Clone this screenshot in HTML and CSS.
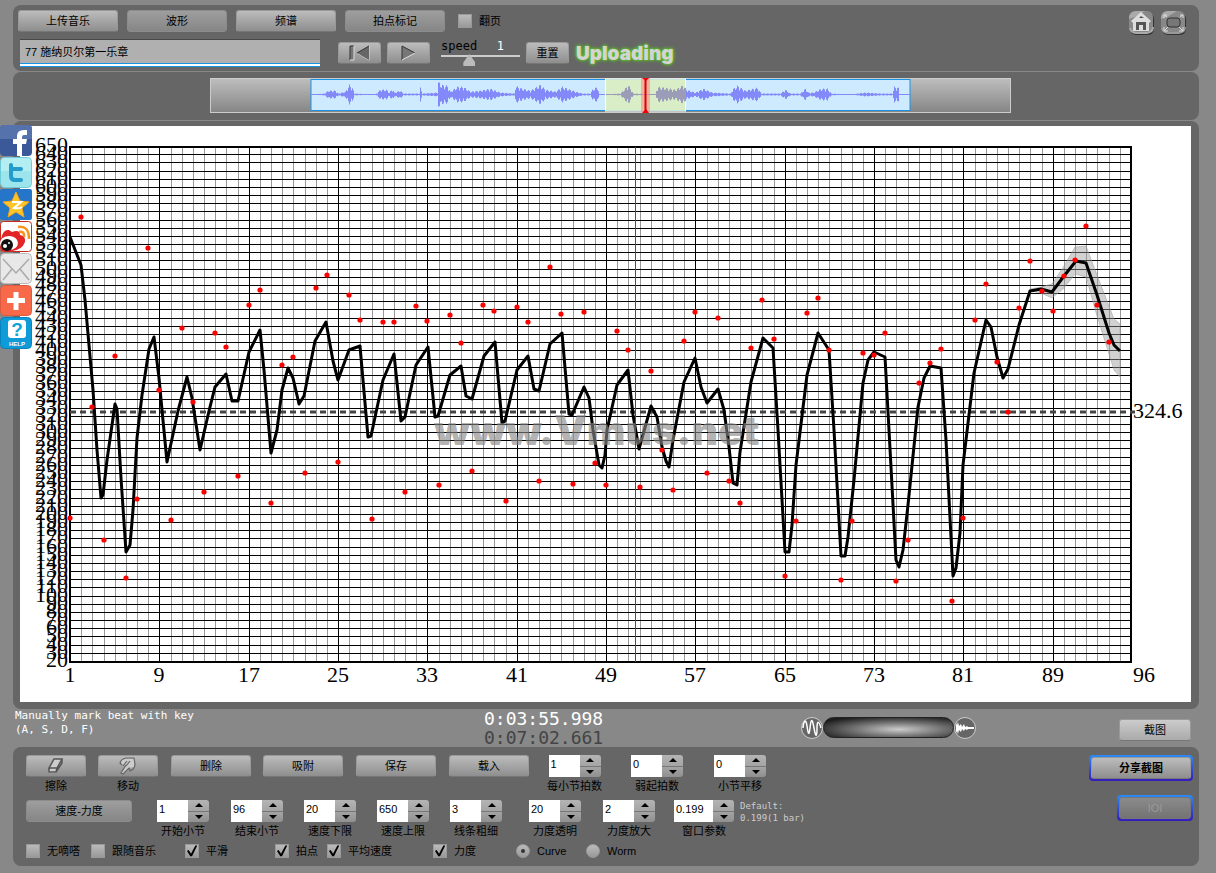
FILE: index.html
```html
<!DOCTYPE html>
<html lang="zh-CN">
<head>
<meta charset="utf-8">
<meta name="viewport" content="width=device-width, initial-scale=1">
<title>Vmus</title>
<link rel="stylesheet" href="styles.css">
</head>
<body>
<header class="panel toolbar">
  <div class="toolbar-main">
    <div class="toolbar-row">
      <button class="btn wide">上传音乐</button>
      <button class="btn wide pressed">波形</button>
      <button class="btn wide">频谱</button>
      <button class="btn wide pressed">拍点标记</button>
      <label class="option flip"><input class="tick" type="checkbox">翻页</label>
    </div>
    <div class="toolbar-row player">
      <input class="title-box" type="text" aria-label="曲目" value="77 施纳贝尔第一乐章">
      <div class="transport">
        <button class="btn small" aria-label="上一个"><svg width="24" height="17" viewBox="0 0 24 17"><path d="M2 1h4v14H2z" fill="#777"/><path d="M2 15V1h4" fill="none" stroke="#333"/><path d="M6 1v14H2M21 1v14L9 8" fill="none" stroke="#ddd"/><path d="M21 1v14L9 8z" fill="#666"/><path d="M21 1L9 8" stroke="#333"/></svg></button>
        <button class="btn small" aria-label="播放"><svg width="20" height="17" viewBox="0 0 20 17"><path d="M3 1v14l13-7z" fill="#777"/><path d="M3 15V1l13 7" fill="none" stroke="#333"/><path d="M3 15l13-7" stroke="#ddd"/></svg></button>
      </div>
      <div class="speed">
        <div class="speed-text"><label for="speed">speed</label><output for="speed">1</output></div>
        <input id="speed" type="range" min="0" max="3" step="0.1" value="1">
      </div>
      <button class="btn small">重置</button>
      <strong class="uploading">Uploading</strong>
    </div>
  </div>
  <nav class="corner">
    <button class="corner-btn" aria-label="主页"><svg width="27" height="26" viewBox="0 0 27 26"><rect x="2" y="3" width="24" height="22" rx="6" fill="#333"/><rect x="1" y="1" width="24" height="22" rx="6" fill="#888"/><path d="M1 9Q1 1 9 1h8L7 7z" fill="#aaa"/><path d="M2 18q1 5 7 5h10q6-1 6-6" fill="none" stroke="#aaa" stroke-width="2"/><path d="M13 2l10 9-2 2v8H5v-8l-2-2z" fill="#ddd"/><path d="M8 12h10v8h-3v-5h-4v5H8zM11 8l2-2 3 2z" fill="#555"/></svg></button>
    <button class="corner-btn" aria-label="全屏"><svg width="27" height="26" viewBox="0 0 27 26"><rect x="2" y="3" width="24" height="22" rx="6" fill="#333"/><rect x="1" y="1" width="24" height="22" rx="6" fill="#888"/><path d="M1 9Q1 1 9 1h8L7 7z" fill="#aaa"/><path d="M2 18q1 5 7 5h10q6-1 6-6" fill="none" stroke="#999" stroke-width="2"/><rect x="7" y="8" width="13" height="9" rx="3" fill="#777" stroke="#333"/><path d="M4 8V5h3M20 5h3v3M4 17v4h4M19 21h4v-4M4 21l4-4M23 21l-4-4M4 5l3 2M23 5l-3 2" fill="none" stroke="#ddd"/></svg></button>
  </nav>
</header>

<section class="panel overview" aria-label="波形">
  <svg class="overview-map" viewBox="210 78 801 35">
    <defs><linearGradient id="steel" x1="0" y1="0" x2="0" y2="1"><stop offset="0" stop-color="#bebebe"/><stop offset="1" stop-color="#858585"/></linearGradient></defs>
    <rect x="210.500" y="78.500" width="800" height="34" fill="url(#steel)" stroke="#ccc"/>
    <rect x="311" y="79.500" width="599" height="31" fill="#cdeaff" stroke="#1893e6"/>
    <path id="wave" stroke="#8389f8" fill="none"/>
    <rect x="605.500" y="79" width="80" height="32" fill="#e1f0a0" fill-opacity=".6" stroke="#fff"/>
    <path id="wave-selected" stroke="#9b9cb8" fill="none"/>
    <rect x="641" y="78" width="9" height="34" fill="#f88" fill-opacity=".6"/>
    <path d="M645.500 78v35" stroke="#d00" stroke-width="2"/>
    <path d="M642 78h7l-3 3zM642 113h7l-3-4z" fill="#e00"/>
  </svg>
</section>

<main class="panel graph">
  <svg class="chart" viewBox="20 126 1171 576" role="img" aria-label="速度曲线">
    <path id="minor" class="minor"/>
    <path id="major" class="major"/>
    <rect class="frame" x="70" y="147" width="1061" height="515"/>
    <g id="y-labels" class="axis y"></g>
    <g id="x-labels" class="axis x"></g>
    <polygon class="band" points="1030,289 1041,287 1052,284 1064,266 1075,247 1086,246 1097,275 1109,306 1114,319 1120,324 1120,377 1114,370 1109,354 1097,316 1086,277 1075,274 1064,288 1052,298 1041,293 1030,291"/>
    <path class="average" d="M70 412H1135"/>
    <polyline id="curve" class="curve"/>
    <text class="watermark" x="434" y="445">www.Vmus.net</text>
    <path class="playhead" d="M635.500 147V662"/>
    <g id="dots" class="dots"></g>
    <text class="axis" x="1133" y="418">324.6</text>
  </svg>
</main>

<section class="status">
  <p class="hint">Manually mark beat with key<br>(A, S, D, F)</p>
  <p class="clock"><time>0:03:55.998</time><time class="total">0:07:02.661</time></p>
  <div class="mixer">
    <svg width="22" height="24" viewBox="0 0 22 24"><circle cx="11" cy="12" r="10.500" fill="#666" stroke="#ccc"/><path d="M2 12C3 3 5 3 6 10S8 21 9 12 11 1 13 12 16 20 16 12 18 5 20 12" fill="none" stroke="#fff" stroke-width="1.500"/></svg>
    <div class="mixer-bar"></div>
    <svg width="22" height="24" viewBox="0 0 22 24"><circle cx="11" cy="12" r="10.500" fill="#666" stroke="#ccc"/><path d="M2 7l1 2 1-3 1 4 2-2 1 3 2-3 1 3 2-1 1 1h6v2h-6l-1 1-2-1-1 2-2-2-1 3-2-2-1 4-1-3-1 2z" fill="#fff"/></svg>
  </div>
  <button class="btn shot">截图</button>
</section>

<section class="panel controls">
  <div class="settings">
    <div class="grid row-edit">
      <div class="field"><button id="erase" class="btn tool"><svg width="20" height="18" viewBox="0 0 20 18"><path d="M8 2l8 0-6 14-8 0z" fill="#ccc"/><path d="M8 2h8l-5 9H3zM3 11v4h7l1-4M10 15l6-9V2" fill="none" stroke="#555" stroke-width="1.500"/></svg></button><label for="erase">擦除</label></div>
      <div class="field"><button id="move" class="btn tool"><svg width="20" height="18" viewBox="0 0 20 18"><path d="M3 7Q2 2 8 2h8v8l-5 1-6 6-2-1 5-7z" fill="#ccc"/><path d="M4 8L2 6q1-4 6-5h8l1 6q0 5-5 7l-1-3-6 6-2-1 5-8M5 9l4-5M8 9l4-5" fill="none" stroke="#666" stroke-width="1.200"/></svg></button><label for="move">移动</label></div>
      <button class="btn action">删除</button>
      <button class="btn action">吸附</button>
      <button class="btn action">保存</button>
      <button class="btn action">载入</button>
      <div class="field" data-stepper="每小节拍数" data-value="1"></div>
      <div class="field" data-stepper="弱起拍数" data-value="0"></div>
      <div class="field" data-stepper="小节平移" data-value="0"></div>
    </div>
    <div class="grid row-range">
      <button class="btn mode pressed">速度-力度</button>
      <div class="field" data-stepper="开始小节" data-value="1"></div>
      <div class="field" data-stepper="结束小节" data-value="96"></div>
      <div class="field" data-stepper="速度下限" data-value="20"></div>
      <div class="field" data-stepper="速度上限" data-value="650"></div>
      <div class="field" data-stepper="线条粗细" data-value="3"></div>
      <div class="field" data-stepper="力度透明" data-value="20"></div>
      <div class="field" data-stepper="力度放大" data-value="2"></div>
      <div class="field long" data-stepper="窗口参数" data-value="0.199"></div>
      <p class="default">Default:<br>0.199(1 bar)</p>
    </div>
    <div class="grid row-options">
      <label class="option"><input class="tick" type="checkbox">无嘀嗒</label>
      <label class="option"><input class="tick" type="checkbox">跟随音乐</label>
      <label class="option"><input class="tick" type="checkbox" checked>平滑</label>
      <label class="option"><input class="tick" type="checkbox" checked>拍点</label>
      <label class="option"><input class="tick" type="checkbox" checked>平均速度</label>
      <label class="option"><input class="tick" type="checkbox" checked>力度</label>
      <label class="option"><input class="dot" type="radio" name="view" checked>Curve</label>
      <label class="option"><input class="dot" type="radio" name="view">Worm</label>
    </div>
  </div>
  <div class="side">
    <div class="focus"><button class="btn share">分享截图</button></div>
    <div class="focus"><button class="btn lol" disabled>IOI</button></div>
  </div>
</section>

<nav class="social">
  <a href="#" aria-label="Facebook"><svg viewBox="0 0 32 32"><rect width="32" height="31" rx="4" fill="#3b5998"/><path d="M0 4q0-4 4-4h24q4 0 4 4v10H0z" fill="#5572ad"/><path d="M17 31V19h-4v-5h4v-3q0-6 7-6h3v5h-3q-2 0-2 2v2h5l-1 5h-4v12z" fill="#fff"/></svg></a>
  <a href="#" aria-label="Twitter"><svg viewBox="0 0 32 32"><rect x=".5" y=".5" width="31" height="30" rx="4" fill="#9ce5ec" stroke="#70cbd8"/><path d="M1 5q0-4 4-4h22q4 0 4 4v9H1z" fill="#b2eef2"/><path d="M11 8v11q0 4 4 4h6M11 12h10" fill="none" stroke="#259bcb" stroke-width="4" stroke-linecap="round"/></svg></a>
  <a href="#" aria-label="Qzone"><svg viewBox="0 0 32 32"><rect width="32" height="31" rx="2" fill="#2576c8"/><path d="M16 3l4 9 9 1-7 6 2 9-8-5-8 5 2-9-7-6 9-1z" fill="#fcc62b" stroke="#f5a31b"/><path d="M12 13h9l-7 6q5 1 8-1" fill="none" stroke="#fff" stroke-width="2"/></svg></a>
  <a href="#" aria-label="Weibo"><svg viewBox="0 0 32 32"><rect x=".5" y=".5" width="31" height="30" rx="3" fill="#fff" stroke="#c62b20"/><path d="M1 18Q3 8 9 9l3 2q8-3 8 3 6 1 5 7-3 8-13 9H1z" fill="#e32528"/><ellipse cx="9" cy="22" rx="9" ry="7" fill="#fff"/><circle cx="7" cy="24" r="6" fill="#111"/><circle cx="5" cy="25" r="2" fill="#fff"/><circle cx="9" cy="22" r="1" fill="#fff"/><path d="M18 6q11-2 11 12M19 11q6-1 5 5" fill="none" stroke="#f7941d" stroke-width="2.500"/></svg></a>
  <a href="#" aria-label="Email"><svg viewBox="0 0 32 32"><rect x=".5" y=".5" width="31" height="30" rx="4" fill="#e8e8e8" stroke="#bbb"/><path d="M3 6l13 14L29 6M3 27l9-11M29 27l-9-11" fill="none" stroke="#aaa" stroke-width="1.500"/></svg></a>
  <a href="#" aria-label="More"><svg viewBox="0 0 32 32"><rect x=".5" y=".5" width="31" height="30" rx="4" fill="#f8694a" stroke="#dc5b40"/><path d="M16 7v18M7 15.500h18" stroke="#fff" stroke-width="5"/></svg></a>
  <a href="#" class="help" aria-label="Help"><svg viewBox="0 0 32 32"><rect x=".5" y=".5" width="31" height="31" rx="4" fill="#0f9bd7" stroke="#0783bd"/><rect x="8" y="3" width="18" height="18" rx="3" fill="#fff"/><text class="help-mark" x="17" y="19">?</text><text class="help-word" x="17" y="29">HELP</text></svg></a>
</nav>
<script src="app.js"></script>
</body>
</html>
```

FILE: styles.css
```css
* { box-sizing: border-box; }
body {
  margin: 0;
  padding: 5px 17px 7px 13px;
  position: relative;
  background: #888;
  color: #000;
  font: 11px/14px "Liberation Sans", "Noto Sans CJK SC", sans-serif;
}
p { margin: 0; }
button, input { font: inherit; color: inherit; margin: 0; }
.panel { background: #666; border-radius: 8px; margin-bottom: 1px; }

.btn {
  height: 22px;
  padding: 0;
  border: 1px solid #999;
  border-bottom-color: #777;
  border-radius: 3px;
  background: linear-gradient(#bcbcbc, #8e8e8e);
  display: flex;
  align-items: center;
  justify-content: center;
}
.pressed { background: linear-gradient(#9e9e9e, #868686); border-color: #8c8c8c; }
.wide { width: 100px; }
.small { width: 43px; }

.toolbar { display: flex; justify-content: space-between; padding: 5px; height: 66px; }
.toolbar-main { display: flex; flex-direction: column; gap: 7px; }
.toolbar-row { display: flex; gap: 9px; }
.flip { margin-left: 4px; }
.player { padding-left: 2px; gap: 6px; align-items: center; }
.title-box {
  width: 300px;
  height: 28px;
  padding: 0 5px 5px;
  border: 0;
  border-top: 1px solid #484848;
  border-bottom: 1px solid #1893e6;
  background: #b0b0b0;
  box-shadow: inset 0 -2px #fff, inset 0 -3px #1893e6;
  outline: 0;
}
.transport { display: flex; gap: 6px; margin: 0 5px 0 12px; }
.speed { width: 79px; }
.speed-text { display: flex; justify-content: space-between; padding-right: 16px; font: 12px/12px "DejaVu Sans Mono", monospace; }
.speed output { color: #fff; }
.speed input {
  display: block;
  width: 100%;
  height: 14px;
  appearance: none;
  background: linear-gradient(#ccc, #ccc) 0 3px / 100% 2px no-repeat;
}
.speed input::-webkit-slider-thumb {
  appearance: none;
  width: 12px;
  height: 14px;
  background: #bbb;
  clip-path: polygon(50% 15%, 100% 75%, 100% 100%, 0 100%, 0 75%);
}
.uploading {
  padding: 2px 0 0 1px;
  font: 900 19px/22px Inter, sans-serif;
  color: #d4d4d4;
  text-shadow: 0 0 2px #5fc526, 0 0 3px #5fc526, 0 0 4px #5fc526;
}
.corner { display: flex; gap: 5px; padding-right: 7px; }
.corner-btn { padding: 0; border: 0; background: none; height: 26px; }
.corner-btn svg { display: block; }

.overview { height: 48px; padding: 6px 0 0 9px; text-align: center; }
.overview-map { width: 801px; max-width: 100%; }

.graph { padding: 5px 8px 7px 7px; margin: 0; }
.chart { display: block; width: 100%; background: #fff; }
.minor { stroke: #999; shape-rendering: crispEdges; }
.major { stroke: #000; shape-rendering: crispEdges; }
.frame { fill: none; stroke: #000; stroke-width: 2; }
.axis { font: 22px "Liberation Serif", serif; }
.y { text-anchor: end; }
.x { text-anchor: middle; }
.band { fill: #999; fill-opacity: .45; stroke: #999; stroke-opacity: .5; }
.average { stroke: #444; stroke-width: 3; stroke-dasharray: 6 4; }
.playhead { stroke: #f00; shape-rendering: crispEdges; }
.curve { fill: none; stroke: #000; stroke-width: 3; stroke-linejoin: round; }
.dots { fill: #f00; }
.watermark { font: 900 41px Inter, sans-serif; fill: #888; fill-opacity: .65; }

.status { display: grid; grid-template-columns: 469fr 317fr 318fr 72px; padding: 0 8px 0 2px; height: 38px; }
.hint { color: #fff; font: 11px/14px "DejaVu Sans Mono", monospace; }
.clock { color: #fff; font: 18px/19px "DejaVu Sans Mono", monospace; }
.clock time { display: block; }
.total { color: #444; }
.mixer { display: flex; align-items: center; height: 37px; }
.mixer-bar { width: 131px; height: 21px; border-radius: 11px; border: 1px solid #222; background: radial-gradient(ellipse at 58% 60%, #ccc, #777 40%, #1d1d1d 85%); }
.shot { margin-top: 10px; width: 72px; background: linear-gradient(#ccc, #aaa); }

.controls { display: flex; justify-content: space-between; padding: 8px 6px 7px 13px; margin: 0; height: 119px; }
.grid { display: grid; justify-items: start; align-items: start; }
.row-edit { grid-template-columns: 72px 73px 92px 93px 93px 98px 84px 83px auto; height: 45px; }
.row-range { grid-template-columns: 131px 74px 73px 73px 73px 79px 74px 71px 66px auto; height: 40px; }
.row-options { grid-template-columns: 65px 94px 90px 52px 106px 83px 70px auto; }
.field { display: flex; flex-direction: column; align-items: center; gap: 2px; white-space: nowrap; }
.tool { width: 60px; }
.action { width: 80px; }
.mode { width: 106px; }
.stepper { display: flex; width: 52px; height: 22px; }
.long .stepper { width: 60px; }
.stepper input { flex: 1; min-width: 0; padding: 0 1px 4px 2px; border: 0; background: #fff; }
.arrows { display: flex; flex-direction: column; width: 21px; }
.arrows button { flex: 1; padding: 0; border: 0; border-radius: 0 3px 0 0; background: linear-gradient(#b4b4b4, #a4a4a4); display: grid; place-items: center; }
.arrows button + button { border-top: 1px solid #777; border-radius: 0 0 3px 0; background: linear-gradient(#a4a4a4, #909090); }
.arrows svg { display: block; }
.default { color: #ccc; font: 9px/12px "DejaVu Sans Mono", monospace; }
.option { display: flex; align-items: center; gap: 7px; height: 22px; white-space: nowrap; }
.tick, .dot { appearance: none; width: 14px; height: 14px; background: linear-gradient(#bbb, #999); border: 1px solid #999; display: grid; place-items: center; }
.tick:checked::before { content: ""; width: 12px; height: 12px; background: #000; clip-path: polygon(8% 50%, 22% 42%, 42% 72%, 78% 4%, 94% 4%, 50% 94%, 36% 94%); }
.dot { border-radius: 50%; }
.dot:checked::before { content: ""; width: 4px; height: 4px; border-radius: 50%; background: #333; }
.side { display: flex; flex-direction: column; align-items: flex-end; gap: 14px; }
.focus { padding: 2px; border-radius: 4px; background: linear-gradient(#2b8cf4, #331bbb); }
.share { width: 100px; font-weight: bold; }
.lol { width: 72px; background: linear-gradient(#8b8b8b, #737373); border-color: #777; color: #999; }

.social { position: absolute; left: 0; top: 125px; width: 32px; }
.social a, .social svg { display: block; width: 32px; height: 32px; }
.help-mark { font: bold 19px "Liberation Sans", sans-serif; fill: #0fa5d7; text-anchor: middle; }
.help-word { font: bold 6px "Liberation Sans", sans-serif; fill: #fff; text-anchor: middle; }
```

FILE: app.js
```js
const byId = (id) => document.getElementById(id);
const beatX = (beat) => 70 + (beat - 1) * 1061 / 95;
const tempoY = (tempo) => 147 + (650 - tempo) * 515 / 630;

// Grid: one column per beat, one row per ten BPM, a heavy column every eight beats.
let minor = "";
let major = "";
for (let beat = 2; beat < 96; beat++) {
  const line = `M${Math.round(beatX(beat)) + 0.5} 147V662`;
  if (beat % 8 === 1) major += line; else minor += line;
}
let yLabels = "";
for (let tempo = 20; tempo <= 650; tempo += 10) {
  const y = Math.round(tempoY(tempo));
  major += `M70 ${y - 0.5}H1131`;
  yLabels += `<text x="68" y="${y + 5}">${tempo}</text>`;
}
byId("minor").setAttribute("d", minor);
byId("major").setAttribute("d", major);
byId("y-labels").innerHTML = yLabels;

let xLabels = `<text x="1144" y="682">96</text>`;
for (let beat = 1; beat < 96; beat += 8) {
  xLabels += `<text x="${Math.round(beatX(beat))}" y="682">${beat}</text>`;
}
byId("x-labels").innerHTML = xLabels;

byId("curve").setAttribute("points", `
70,237 81,265 85,300 93,390 97,450 101,498 103,495 107,460 115,404 117,409 121,478 126,552 130,545 133,510 137,438
142,395 149,349 154,337 159,378 162,410 167,462 178,411 187,377 192,398 200,450 209,411 215,387 226,374 232,401
238,401 249,352 260,330 264,370 271,453 277,430 282,390 288,368 293,378 299,404 304,396 315,341 326,322 333,361
338,380 349,350 360,346 368,437 371,436 383,380 394,354 401,421 405,417 416,365 428,347 435,417 438,416 450,375
461,366 466,396 472,399 484,356 495,342 502,423 505,421 517,370 528,356 534,389 539,391 550,344 562,333 569,414
572,415 584,387 589,398 593,430 599,465 602,468 605,455 607,430 617,385 628,370 633,415 639,449 651,406 657,417
662,447 666,461 669,467 673,440 684,382 695,358 701,387 707,403 718,389 724,410 729,447 733,483 737,485 740,452
751,382 763,338 773,348 778,430 785,552 789,552 792,525 796,465 807,375 818,333 829,350 834,430 841,556 845,556
848,537 854,480 863,383 868,360 874,352 885,357 889,430 896,560 899,567 903,550 908,505 918,407 924,378 930,366
941,368 946,440 953,576 956,568 960,533 963,465 974,373 986,320 991,327 997,357 1003,378 1008,369 1019,325
1030,291 1041,289 1052,292 1064,276 1076,261 1086,263 1097,295 1109,333 1114,345 1120,351`);

// Vertical position of the measured tempo at each beat.
const measured = [518, 217, 407, 540, 356, 578, 499, 248, 390, 520, 328, 402, 492, 333, 347, 476, 305, 290, 503, 365,
  357, 473, 288, 275, 462, 295, 320, 519, 322, 322, 492, 306, 321, 485, 315, 343, 471, 305, 311, 501, 307, 322, 481,
  267, 314, 484, 312, 463, 485, 331, 350, 487, 371, 450, 490, 341, 312, 473, 318, 481, 503, 348, 300, 339, 576, 521,
  313, 298, 350, 580, 521, 353, 355, 333, 581, 540, 383, 363, 349, 601, 518, 320, 284, 362, 412, 308, 261, 291, 311,
  276, 260, 226, 305, 342];
byId("dots").innerHTML = measured
  .map((y, i) => `<circle cx="${Math.round(beatX(i + 1))}" cy="${y}" r="2.6"/>`).join("");

// Loudness envelope as [x, half height] pairs.
const envelope = [[311, 0], [324, 1], [328, 4], [335, 4], [338, 1], [345, 3], [349, 10], [352, 7], [354, 1], [375, 0],
  [380, 5], [386, 5], [389, 2], [392, 6], [394, 2], [400, 4], [403, 1], [419, 1], [420, 7], [422, 1], [437, 2],
  [438, 13], [441, 10], [447, 9], [450, 3], [457, 8], [463, 8], [470, 3], [480, 4], [490, 6], [500, 2], [514, 1],
  [515, 9], [522, 6], [530, 4], [540, 10], [545, 5], [555, 3], [562, 8], [575, 3], [582, 1], [590, 1], [592, 5],
  [597, 8], [599, 0], [620, 1], [628, 10], [633, 1], [655, 0], [657, 8], [665, 7], [675, 5], [683, 10], [686, 5],
  [695, 2], [703, 6], [712, 2], [730, 1], [733, 6], [737, 9], [745, 4], [757, 7], [761, 1], [780, 1], [785, 5],
  [790, 1], [800, 1], [805, 6], [808, 2], [813, 2], [821, 6], [827, 6], [831, 1], [850, 0], [865, 2], [880, 1],
  [892, 1], [894, 8], [898, 7], [899, 0], [910, 0]];
let wave = "M311 94.5H910";
let selected = "M606 94.5H685";
for (let x = 312, k = 0; x < 910; x++) {
  while (envelope[k + 1][0] < x) k++;
  const [x0, a0] = envelope[k];
  const [x1, a1] = envelope[k + 1];
  const size = (a0 + (a1 - a0) * (x - x0) / (x1 - x0)) * (0.45 + 0.55 * Math.abs(Math.sin(x * 2.3)));
  const bar = `M${x + 0.5} ${(94.5 - size).toFixed(1)}V${(94.5 + size).toFixed(1)}`;
  if (x > 605 && x < 686) selected += bar; else wave += bar;
}
byId("wave").setAttribute("d", wave);
byId("wave-selected").setAttribute("d", selected);

document.querySelectorAll("[data-stepper]").forEach((field, i) => {
  const { stepper, value } = field.dataset;
  field.innerHTML = `<div class="stepper"><input id="step-${i}" type="text" value="${value}">
    <div class="arrows">
      <button aria-label="增加"><svg width="8" height="4"><path d="M0 4L4 0L8 4z"/></svg></button>
      <button aria-label="减少"><svg width="8" height="4"><path d="M0 0L4 4L8 0z"/></svg></button>
    </div></div><label for="step-${i}">${stepper}</label>`;
});
```
